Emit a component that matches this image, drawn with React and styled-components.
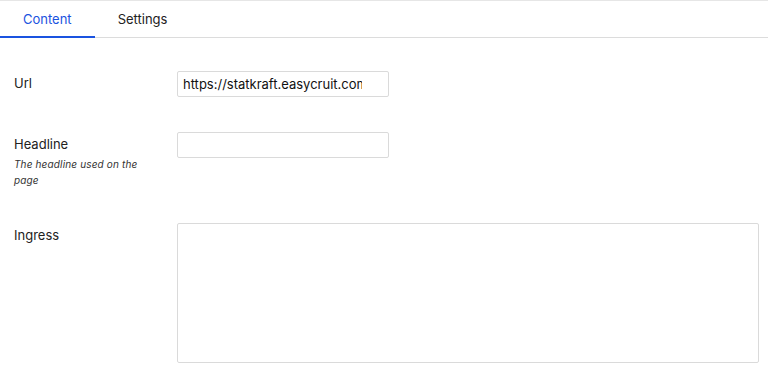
import React, { useState } from "react";
import styled, { createGlobalStyle } from "styled-components";

const FONT = `Inter, Roboto, "Liberation Sans", sans-serif`;

const Global = createGlobalStyle`
  html, body { margin: 0; padding: 0; background: #fff; }
  body { font-family: ${FONT}; color: #222; }
  * { box-sizing: border-box; }
`;

const Page = styled.div`
  border-top: 1px solid #e6e6e6;
  width: 768px;
`;

const TabBar = styled.div`
  display: flex;
  height: 37px;
  border-bottom: 1px solid #dcdcdc;
`;

const Tab = styled.button`
  all: unset;
  box-sizing: border-box;
  cursor: pointer;
  display: flex;
  align-items: center;
  justify-content: center;
  padding: 0 23px;
  height: 37px;
  font-family: ${FONT};
  font-size: 13px;
  color: ${(p) => (p.$active ? "#1a53e0" : "#222")};
  border-bottom: 2px solid ${(p) => (p.$active ? "#1a53e0" : "transparent")};
`;

const Form = styled.div`
  padding: 33px 9px 0 14px;
`;

const Row = styled.div`
  display: grid;
  grid-template-columns: 163px 1fr;
  align-items: start;
  margin-bottom: ${(p) => p.$gap}px;
`;

const LabelBlock = styled.div`
  padding-top: 2px;
`;

const Label = styled.div`
  font-size: 13px;
  line-height: 20px;
  color: #222;
`;

const Description = styled.div`
  margin-top: 2px;
  font-size: 10px;
  line-height: 16px;
  letter-spacing: 0.15px;
  font-style: italic;
  color: #333;
  width: 130px;
`;

const TextInput = styled.input`
  width: 212px;
  height: 26px;
  border: 1px solid #dadada;
  border-radius: 2px;
  padding: 0 26px 0 5px;
  font-family: ${FONT};
  font-size: 13px;
  color: #111;
  outline: none;
  background: #fff;
`;

const TextArea = styled.textarea`
  display: block;
  width: 582px;
  height: 140px;
  border: 1px solid #dadada;
  border-radius: 2px;
  resize: none;
  outline: none;
  padding: 5px;
  font-family: ${FONT};
  font-size: 13px;
`;

export default function App() {
  const [tab, setTab] = useState("content");
  const [url, setUrl] = useState("https://statkraft.easycruit.com");
  const [headline, setHeadline] = useState("");
  const [ingress, setIngress] = useState("");
  return (
    <Page>
      <Global />
      <TabBar>
        <Tab $active={tab === "content"} onClick={() => setTab("content")}>Content</Tab>
        <Tab $active={tab === "settings"} onClick={() => setTab("settings")}>Settings</Tab>
      </TabBar>
      <Form>
        <Row $gap={35}>
          <LabelBlock>
            <Label>Url</Label>
          </LabelBlock>
          <TextInput value={url} onChange={(e) => setUrl(e.target.value)} />
        </Row>
        <Row $gap={35}>
          <LabelBlock>
            <Label>Headline</Label>
            <Description>The headline used on the page</Description>
          </LabelBlock>
          <TextInput value={headline} onChange={(e) => setHeadline(e.target.value)} />
        </Row>
        <Row $gap={0}>
          <LabelBlock>
            <Label>Ingress</Label>
          </LabelBlock>
          <TextArea value={ingress} onChange={(e) => setIngress(e.target.value)} />
        </Row>
      </Form>
    </Page>
  );
}
